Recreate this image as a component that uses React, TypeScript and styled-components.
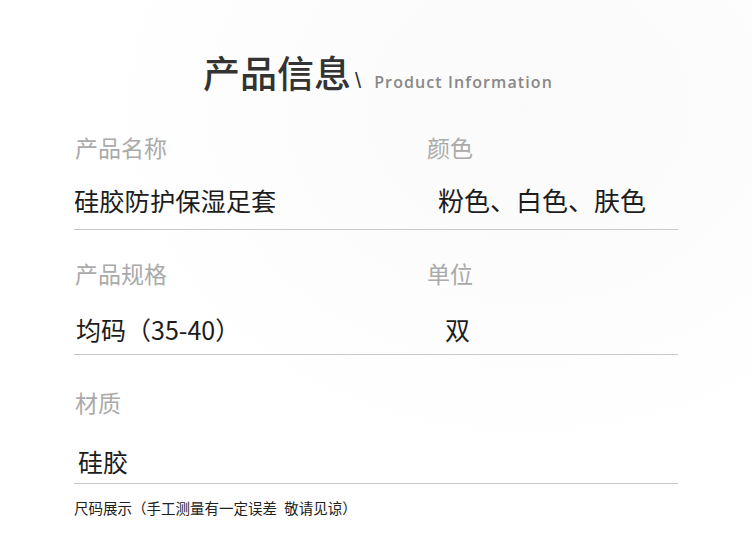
import React from 'react';
import styled, { createGlobalStyle } from 'styled-components';

const GlobalStyle = createGlobalStyle`
    html, body {
        margin: 0;
        padding: 0;
        background: rgb(255, 255, 255);
    }
    body {
        font-family: "Noto Sans CJK SC", "Noto Sans", sans-serif;
        color: rgb(34, 34, 34);
    }
`;

const Page = styled('div')`
    width: 752px;
    height: 536px;
    overflow: hidden;
    background: radial-gradient(ellipse at 70% 20%, rgb(250, 250, 250), rgb(255, 255, 255) 60%);
`;

const Header = styled('div')`
    display: flex;
    align-items: baseline;
    justify-content: center;
    padding-top: 50px;
    height: 44px;
    padding-left: 4px;
`;

const Title = styled('h1')`
    margin: 0;
    font-size: 37px;
    line-height: 44px;
    font-weight: 500;
    color: rgb(51, 51, 51);
`;

const Slash = styled('span')`
    font-family: "Liberation Sans", sans-serif;
    font-size: 22px;
    font-weight: 300;
    color: rgb(51, 51, 51);
    margin: 0 13px 0 4px;
`;

const Subtitle = styled('span')`
    font-family: "Open Sans", "Noto Sans", sans-serif;
    font-size: 16px;
    letter-spacing: 1.1px;
    color: rgb(136, 136, 136);
    font-weight: 600;
`;

const Fields = styled('div')`
    margin-left: 74px;
    width: 604px;
`;

const Row = styled('div')<{ $top: number; $bottom: number }>`
    display: grid;
    grid-template-columns: 352px 1fr;
    padding-top: ${(p) => p.$top}px;
    padding-bottom: ${(p) => p.$bottom}px;
    border-bottom: 1px solid rgb(200, 200, 200);
`;

const Cell = styled('div')<{ $gap: number }>`
    display: flex;
    flex-direction: column;
    gap: ${(p) => p.$gap}px;
`;

const Label = styled('div')`
    font-size: 23px;
    line-height: 30px;
    color: rgb(170, 170, 170);
    padding-left: 1px;
`;

const Value = styled('div')<{ $indent?: number; $size?: number }>`
    font-size: ${(p) => p.$size ?? 25}px;
    line-height: 36px;
    color: rgb(28, 28, 28);
    padding-left: ${(p) => p.$indent ?? 0}px;
    white-space: nowrap;
`;

const Note = styled('div')`
    margin-left: 74px;
    margin-top: 14px;
    font-size: 14.5px;
    line-height: 20px;
    color: rgb(34, 34, 34);
    word-spacing: 4px;
`;

export default function App() {
    return (
        <Page>
            <GlobalStyle />
            <Header>
                <Title>产品信息</Title>
                <Slash>\</Slash>
                <Subtitle>Product Information</Subtitle>
            </Header>
            <Fields>
                <Row $top={38} $bottom={11}>
                    <Cell $gap={20}>
                        <Label>产品名称</Label>
                        <Value $size={25.3}>硅胶防护保湿足套</Value>
                    </Cell>
                    <Cell $gap={20}>
                        <Label>颜色</Label>
                        <Value $indent={12} $size={26}>粉色、白色、肤色</Value>
                    </Cell>
                </Row>
                <Row $top={28} $bottom={7}>
                    <Cell $gap={23}>
                        <Label>产品规格</Label>
                        <Value $indent={2}>均码（35-40）</Value>
                    </Cell>
                    <Cell $gap={23}>
                        <Label>单位</Label>
                        <Value $indent={19}>双</Value>
                    </Cell>
                </Row>
                <Row $top={32} $bottom={4}>
                    <Cell $gap={26}>
                        <Label>材质</Label>
                        <Value $indent={4}>硅胶</Value>
                    </Cell>
                    <Cell $gap={26} />
                </Row>
            </Fields>
            <Note>尺码展示（手工测量有一定误差 敬请见谅）</Note>
        </Page>
    );
}
